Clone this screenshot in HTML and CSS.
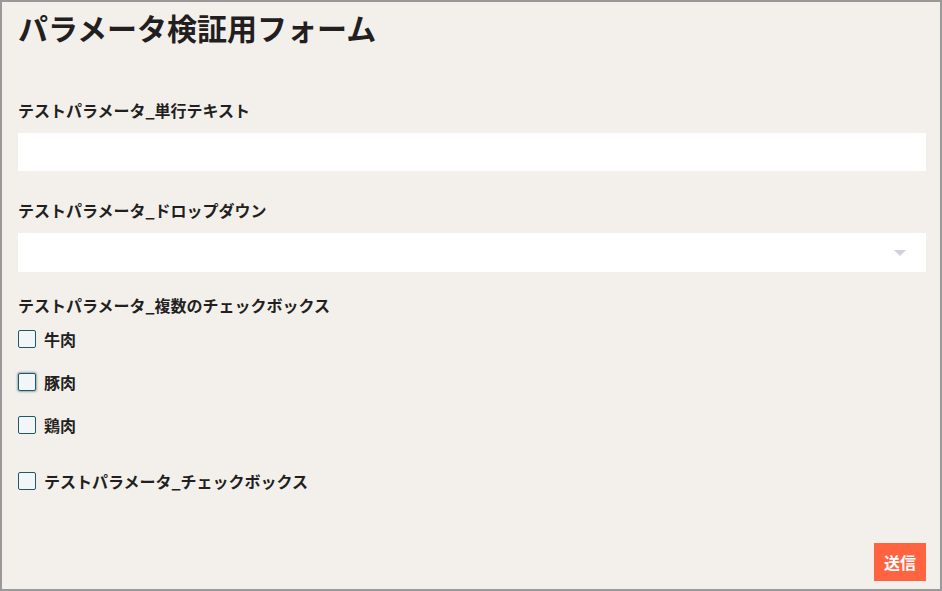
FILE: index.html
```html
<!DOCTYPE html>
<html lang="ja">
<head>
<meta charset="utf-8">
<title>パラメータ検証用フォーム</title>
<link rel="stylesheet" href="styles.css">
</head>
<body>
<form class="page">
  <h1 class="title">パラメータ検証用フォーム</h1>

  <div class="field field-text">
    <label class="label" for="t1">テストパラメータ_単行テキスト</label>
    <input class="input" id="t1" type="text">
  </div>

  <div class="field field-select">
    <label class="label" for="s1">テストパラメータ_ドロップダウン</label>
    <div class="select-wrap">
      <select class="select" id="s1"><option></option></select>
      <svg class="select-arrow" width="12" height="6" viewBox="0 0 12 6"><path d="M0 0H12L6 6Z" fill="#d1d1dd"/></svg>
    </div>
  </div>

  <div class="field field-checks">
    <div class="label">テストパラメータ_複数のチェックボックス</div>
    <div class="checks">
      <label class="check"><span class="box"></span><span class="check-text">牛肉</span></label>
      <label class="check"><span class="box box-focus"></span><span class="check-text">豚肉</span></label>
      <label class="check"><span class="box"></span><span class="check-text">鶏肉</span></label>
    </div>
  </div>

  <label class="check check-single"><span class="box"></span><span class="check-text">テストパラメータ_チェックボックス</span></label>

  <div class="actions">
    <button class="submit" type="button">送信</button>
  </div>
</form>
</body>
</html>
```
FILE: styles.css
```css
html, body {
  margin: 0;
  padding: 0;
}
body {
  font-family: "Noto Sans CJK JP", "Noto Sans", sans-serif;
  color: #231f20;
  background: #f3f0ec;
}
.page {
  box-sizing: border-box;
  width: 942px;
  height: 591px;
  border: 2px solid #999999;
  background: #f3f0ec;
  padding: 3px 14px 8px 16px;
  display: flex;
  flex-direction: column;
}
.title {
  margin: 0;
  font-size: 30px;
  line-height: 45px;
  font-weight: 700;
}
.label {
  display: block;
  font-size: 16px;
  line-height: 24px;
  font-weight: 700;
}
.field-text {
  margin-top: 48px;
}
.field-select {
  margin-top: 27px;
}
.field-checks {
  margin-top: 21px;
}
.field-text .label,
.field-select .label {
  margin-bottom: 11px;
}
.input,
.select {
  display: block;
  box-sizing: border-box;
  width: 100%;
  height: 38px;
  border: none;
  background: #ffffff;
  font-family: inherit;
  font-size: 16px;
  outline: none;
  margin: 0;
}
.select-wrap {
  position: relative;
}
.select {
  height: 39px;
  appearance: none;
  -webkit-appearance: none;
  border-radius: 0;
}
.select-arrow {
  position: absolute;
  right: 20px;
  top: 17px;
}
.checks {
  margin-top: 10px;
  display: flex;
  flex-direction: column;
  gap: 19px;
}
.check {
  display: flex;
  align-items: center;
  gap: 8px;
  height: 24px;
  font-size: 16px;
  font-weight: 700;
}
.box {
  box-sizing: border-box;
  width: 18px;
  height: 18px;
  border: 1.5px solid #1f5a63;
  border-radius: 2px;
  background: #f3f6f9;
  flex: none;
}
.box-focus {
  box-shadow: 0 0 2px 1px rgba(31, 90, 99, 0.45);
}
.check-single {
  margin-top: 32px;
}
.actions {
  margin-top: auto;
  display: flex;
  justify-content: flex-end;
}
.submit {
  height: 38px;
  padding: 0 10px;
  border: none;
  background: #ff6340;
  color: #ffffff;
  font-family: inherit;
  font-size: 16px;
  font-weight: 700;
  cursor: pointer;
}
```
